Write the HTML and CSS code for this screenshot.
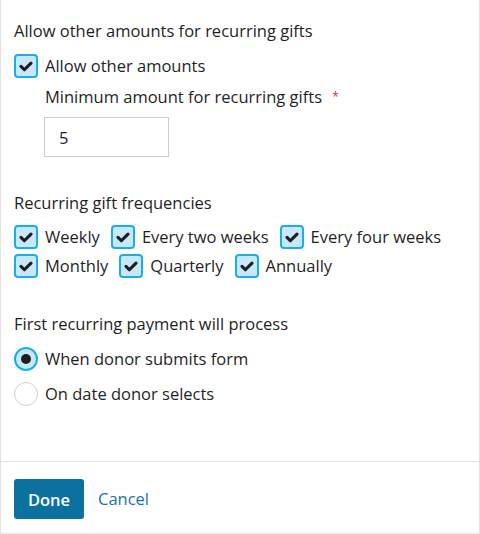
FILE: index.html
```html
<!DOCTYPE html>
<html>
<head>
<meta charset="utf-8">
<link rel="stylesheet" href="styles.css">
</head>
<body>
<div class="panel">
  <div class="content">
    <div class="heading">Allow other amounts for recurring gifts</div>
    <label class="check row-first">
      <span class="box"><svg viewBox="0 0 24 24" width="24" height="24"><path d="M6 12.5 L10 16.5 L18 8.5" fill="none" stroke="#1e1e1e" stroke-width="3.8" stroke-linecap="round" stroke-linejoin="round"/></svg></span>
      <span class="text">Allow other amounts</span>
    </label>
    <div class="sub">
      <div class="sublabel">Minimum amount for recurring gifts <span class="req">*</span></div>
      <div class="input">5</div>
    </div>

    <div class="heading section">Recurring gift frequencies</div>
    <div class="checks">
      <div class="crow">
        <label class="check"><span class="box"><svg viewBox="0 0 24 24" width="24" height="24"><path d="M6 12.5 L10 16.5 L18 8.5" fill="none" stroke="#1e1e1e" stroke-width="3.8" stroke-linecap="round" stroke-linejoin="round"/></svg></span><span class="text">Weekly</span></label>
        <label class="check"><span class="box"><svg viewBox="0 0 24 24" width="24" height="24"><path d="M6 12.5 L10 16.5 L18 8.5" fill="none" stroke="#1e1e1e" stroke-width="3.8" stroke-linecap="round" stroke-linejoin="round"/></svg></span><span class="text">Every two weeks</span></label>
        <label class="check"><span class="box"><svg viewBox="0 0 24 24" width="24" height="24"><path d="M6 12.5 L10 16.5 L18 8.5" fill="none" stroke="#1e1e1e" stroke-width="3.8" stroke-linecap="round" stroke-linejoin="round"/></svg></span><span class="text">Every four weeks</span></label>
      </div>
      <div class="crow">
        <label class="check"><span class="box"><svg viewBox="0 0 24 24" width="24" height="24"><path d="M6 12.5 L10 16.5 L18 8.5" fill="none" stroke="#1e1e1e" stroke-width="3.8" stroke-linecap="round" stroke-linejoin="round"/></svg></span><span class="text">Monthly</span></label>
        <label class="check"><span class="box"><svg viewBox="0 0 24 24" width="24" height="24"><path d="M6 12.5 L10 16.5 L18 8.5" fill="none" stroke="#1e1e1e" stroke-width="3.8" stroke-linecap="round" stroke-linejoin="round"/></svg></span><span class="text">Quarterly</span></label>
        <label class="check"><span class="box"><svg viewBox="0 0 24 24" width="24" height="24"><path d="M6 12.5 L10 16.5 L18 8.5" fill="none" stroke="#1e1e1e" stroke-width="3.8" stroke-linecap="round" stroke-linejoin="round"/></svg></span><span class="text">Annually</span></label>
      </div>
    </div>

    <div class="heading section">First recurring payment will process</div>
    <div class="radios">
      <label class="radio"><span class="dot on"><span class="inner"></span></span><span class="text">When donor submits form</span></label>
      <label class="radio"><span class="dot"></span><span class="text">On date donor selects</span></label>
    </div>
  </div>
  <div class="footer">
    <button class="done">Done</button>
    <span class="cancel">Cancel</span>
  </div>
</div>
</body>
</html>
```

FILE: styles.css
```css
* { box-sizing: border-box; }
html, body { margin: 0; padding: 0; background: #fff; }
body {
  font-family: "Open Sans", "Noto Sans", sans-serif;
  font-size: 16.5px;
  color: #1f1f1f;
}
.panel {
  width: 480px;
  height: 534px;
  border-left: 1px solid #e2e2e2;
  border-right: 1px solid #e2e2e2;
  border-bottom: 1px solid #e2e2e2;
  display: flex;
  flex-direction: column;
}
.content {
  flex: 1;
  padding: 19px 13px 0 13px;
  display: flex;
  flex-direction: column;
}
.heading {
  line-height: 24px;
}
.heading.section { margin-top: 34px; }
.check {
  display: flex;
  align-items: center;
  gap: 7px;
  line-height: 24px;
}
.row-first { margin-top: 11px; }
.box {
  width: 24px;
  height: 24px;
  border: 2px solid #1aaee6;
  background: #c6e8fa;
  border-radius: 4px;
  display: flex;
  align-items: center;
  justify-content: center;
  flex: none;
}
.box svg { display: block; width: 20px; height: 20px; }
.sub {
  padding-left: 31px;
  margin-top: 7px;
}
.sublabel { line-height: 24px; }
.req { color: #e0245e; font-size: 12px; vertical-align: top; margin-left: 6px; }
.input {
  margin-top: 8px;
  margin-left: -1px;
  width: 125px;
  height: 40px;
  border: 1px solid #cccccc;
  padding-left: 14px;
  display: flex;
  align-items: center;
}
.checks {
  margin-top: 10px;
  display: flex;
  flex-direction: column;
  gap: 5px;
}
.crow {
  display: flex;
  gap: 11px;
}
.radios {
  margin-top: 11px;
  display: flex;
  flex-direction: column;
  gap: 11px;
}
.radio {
  display: flex;
  align-items: center;
  gap: 7px;
  line-height: 24px;
}
.dot {
  width: 24px;
  height: 24px;
  border-radius: 50%;
  border: 1px solid #cfcfcf;
  background: #fff;
  display: flex;
  align-items: center;
  justify-content: center;
  flex: none;
}
.dot.on {
  border: 2px solid #1aaee6;
  background: #c6e8fa;
}
.inner {
  width: 10px;
  height: 10px;
  border-radius: 50%;
  background: #1e1e1e;
}
.footer {
  border-top: 1px solid #e2e2e2;
  height: 72px;
  padding: 17px 13px 0 13px;
  display: flex;
  align-items: flex-start;
  gap: 14px;
}
.done {
  width: 70px;
  height: 40px;
  border: none;
  border-radius: 3px;
  background: #0b72a0;
  color: #fff;
  font-family: inherit;
  font-size: 16.5px;
  font-weight: 600;
  padding: 0;
}
.cancel {
  color: #1a72a6;
  line-height: 40px;
}
```
